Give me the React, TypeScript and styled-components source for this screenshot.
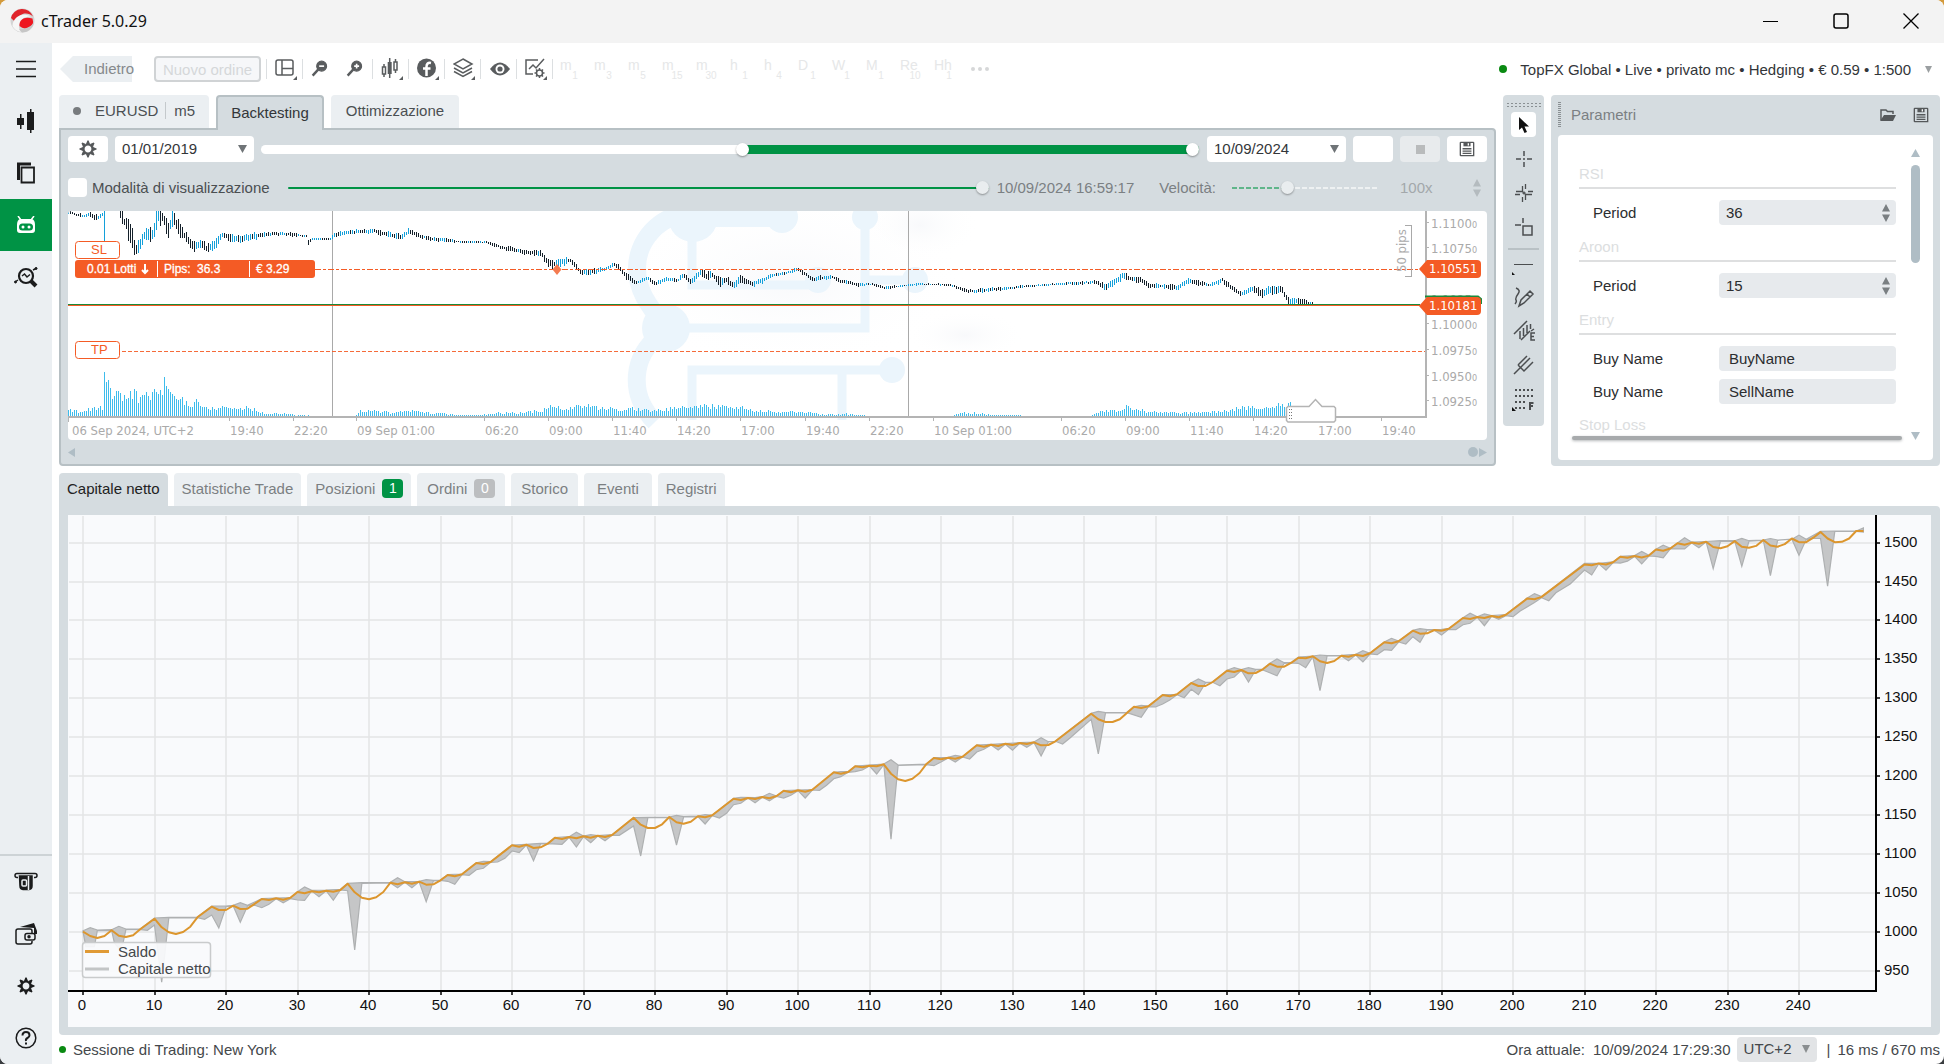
import React from "react";
import styled, { createGlobalStyle, css } from "styled-components";

const ui = `"Liberation Sans", Arial, sans-serif`;
const titleFont = `"Noto Sans", "Open Sans", sans-serif`;
const axisFont = `"DejaVu Sans Condensed", "Noto Sans", sans-serif`;
const c = {
  panel: "#d5dce0",
  soft: "#ebeff2",
  edge: "#b7c0c4",
  ink: "#333639",
  dim: "#7b8083",
  green: "#009345",
  orange: "#f45b25",
  steel: "#afbdc5",
};

const Global = createGlobalStyle`
  * { box-sizing: border-box; }
  body { margin: 0; background: linear-gradient(#d39a3c 50%, #3a3d40 50%); font-family: ${ui}; font-size: 15px; color: ${c.ink}; }
  button, input, select { font: inherit; color: inherit; margin: 0; padding: 0; border: 0; background: none; }
  svg { display: block; }
`;

const Window = styled.div`
  min-height: 100vh; display: flex; flex-direction: column;
  background: #fff; border-radius: 8px; overflow: hidden;
`;
const TitleBar = styled.header`
  height: 43px; background: #f3f3f3; display: flex; align-items: center; padding: 0 25px 2px 10px;
`;
const Title = styled.h1`
  flex: 1; margin: 0 0 0 6px; font: 400 16px/24px ${titleFont}; color: #111;
`;
const WindowButtons = styled.div`display: flex; gap: 54px;`;
const PlainButton = styled.button`display: flex; align-items: center; justify-content: center;`;
const Body = styled.div`flex: 1; display: flex;`;
const Sidebar = styled.nav`
  width: 52px; flex: none; background: ${c.soft}; display: flex; flex-direction: column;
`;
const SideButton = styled.button<{ $active?: boolean }>`
  height: 52px; display: flex; align-items: center; justify-content: center; color: #1b1c1d;
  ${p => p.$active && css`background: ${c.green}; color: #fff;`}
`;
const SideFoot = styled.div`
  margin-top: auto; border-top: 2px solid #cdd3d6; display: flex; flex-direction: column;
`;
const Main = styled.main`flex: 1; min-width: 0; padding: 0 4px 0 7px; display: flex; flex-direction: column;`;

const Toolbar = styled.div`height: 52px; display: flex; align-items: center;`;
const BackButton = styled.button`
  width: 72px; height: 26px; margin: 0 22px 0 1px; padding: 0 0 2px 24px; text-align: left;
  background: ${c.soft}; color: #85898c; white-space: nowrap;
  clip-path: polygon(0 50%, 18% 0, 110% 0, 110% 100%, 18% 100%);
`;
const OrderButton = styled.button`
  width: 107px; height: 26px; margin-right: 5px; border: 2px solid #d0d3d5; border-radius: 4px;
  background: #f6f7f9; color: #d5d7d9;
`;
const ToolGroup = styled.div<{ $wide?: boolean }>`
  width: ${p => (p.$wide ? 70 : 36)}px; height: 20px; padding-left: ${p => (p.$wide ? 0 : 3)}px; border-left: 1px solid #dcdfe1;
  display: flex; align-items: center; justify-content: ${p => (p.$wide ? "space-around" : "center")}; color: #595c5e;
`;
const Frames = styled.div`display: flex; padding-left: 4px; border-left: 1px solid #dcdfe1; height: 20px; align-items: center;`;
const Frame = styled.button`
  width: 34px; height: 26px; padding-left: 3px; display: flex; color: #e6e7e8; font-size: 14px; line-height: 19px;
  sub { font-size: 10px; line-height: 12px; width: 14px; margin-left: -2px; align-self: flex-end; text-align: center; }
`;
const FrameName = styled.span`width: 10px; text-align: left;`;
const Account = styled.button`
  margin-left: auto; display: flex; align-items: center; padding-right: 8px; white-space: nowrap;
`;
const Dot = styled.span<{ $color: string; $size: number }>`
  width: ${p => p.$size}px; height: ${p => p.$size}px; border-radius: 50%; background: ${p => p.$color}; flex: none;
`;
const AccountName = styled.span`margin: 0 14px 0 13px;`;

const Top = styled.div`display: flex; gap: 7px; align-items: stretch;`;
const Left = styled.section`flex: 1; min-width: 0; display: flex; flex-direction: column;`;
const Tabs = styled.div<{ $gap: number }>`display: flex; gap: ${p => p.$gap}px; height: 33px;`;
const Tab = styled.button<{ $active?: boolean; $pad: number }>`
  height: 33px; padding: 0 ${p => p.$pad}px 2px; border-radius: 4px 4px 0 0; background: ${c.soft};
  display: flex; align-items: center; white-space: nowrap; color: #4b4f52;
`;
const TopTab = styled(Tab)`
  ${p => p.$active && css`height: 35px; background: ${c.panel}; border: 2px solid ${c.edge}; border-bottom: 0; z-index: 1; color: ${c.ink};`}
`;
const LowTab = styled(Tab)`
  color: #7b7f82; gap: 7px;
  ${p => p.$active && css`background: ${c.panel}; color: #222;`}
`;
const Split = styled.span`width: 1px; height: 17px; background: #c4c9cc; margin: 0 8px 0 7px;`;
const Badge = styled.span<{ $color: string }>`
  width: 21px; height: 19px; border-radius: 4px; background: ${p => p.$color}; color: #fff;
  font-size: 14px; line-height: 19px; text-align: center;
`;
const Panel = styled.div`
  flex: 1; background: ${c.panel}; border: 2px solid ${c.edge}; border-radius: 0 4px 4px 4px; padding: 6px 7px 0;
`;
const Row = styled.div`display: flex; height: 26px; align-items: stretch; gap: 7px;`;
const RowTwo = styled.div`display: flex; height: 49px; padding: 2px 6px 0 0; align-items: center; color: ${c.dim};`;
const BoxButton = styled.button<{ $off?: boolean }>`
  width: 40px; border-radius: 4px; background: ${p => (p.$off ? "#e8ebed" : "#fff")};
  display: flex; align-items: center; justify-content: center; color: #55585a;
`;
const SelectWrap = styled.div<{ $w: number; $bg: string }>`
  width: ${p => p.$w}px; border-radius: 4px; background: ${p => p.$bg}; display: grid; align-items: center;
  > * { grid-area: 1 / 1; }
  > svg { justify-self: end; margin-right: 7px; pointer-events: none; }
`;
const Select = styled.select`appearance: none; height: 100%; padding-left: 7px; outline: 0; padding-bottom: 1px;`;

const thumb = (color: string) => `
  appearance: none; width: 13px; height: 13px; border-radius: 50%; background: ${color}; border: 0;
  box-shadow: 0 1px 2px rgba(0,0,0,.35); pointer-events: auto;
`;
const RangeWrap = styled.div<{ $track: string; $h: number }>`
  flex: 1; display: grid; align-items: center; margin-right: 1px;
  &::before { content: ""; grid-area: 1 / 1; height: ${p => p.$h}px; border-radius: 5px; background: ${p => p.$track}; }
  > input { grid-area: 1 / 1; }
`;
const Range = styled.input<{ $thumb: string }>`
  appearance: none; width: 100%; height: 16px; background: transparent; pointer-events: none;
  &::-webkit-slider-thumb { ${p => thumb(p.$thumb)} }
`;
const SpeedWrap = styled(RangeWrap)`flex: none; width: 146px; margin: 0 22px 0 16px; &::before { border-radius: 0; }`;
const ProgressWrap = styled(RangeWrap)`margin: 0 8px 0 18px;`;
const Check = styled.label`
  display: flex; align-items: center; gap: 5px; color: #4b4f52;
  input { appearance: none; width: 19px; height: 19px; border-radius: 4px; background: #fff; }
`;
const SpeedLabel = styled.label`margin-left: 25px;`;
const SpeedInput = styled.input`width: 73px; color: #a3a8ab;`;
const ChartBox = styled.div`
  background: #fff; border-radius: 4px; overflow: hidden;
  svg { width: 100%; height: auto; }
`;
const ScrollRow = styled.div`height: 24px; display: flex; align-items: center; gap: 1px; > :first-child { margin-right: auto; }`;

const Strip = styled.aside`
  width: 41px; align-self: flex-start; background: ${c.panel}; border-radius: 4px; padding: 7px 0 6px;
  display: flex; flex-direction: column; align-items: center; color: #4b4e50;
`;
const StripButton = styled.button<{ $active?: boolean }>`
  width: 25px; height: 25px; margin-bottom: 9px; border-radius: 4px; display: flex; align-items: center; justify-content: center;
  ${p => p.$active && css`background: #fff;`}
`;
const Grip = styled.span`
  width: 35px; height: 5px; margin-bottom: 5px;
  background: radial-gradient(circle, #8a9093 1px, transparent 1px) 0 0 / 4px 3px;
`;
const StripRule = styled.span`width: 31px; height: 2px; background: #b9c1c5;`;

const Params = styled.aside`
  width: 389px; background: ${c.panel}; border-radius: 4px; padding: 0 7px 6px; display: flex; flex-direction: column;
`;
const ParamsHead = styled.div`height: 40px; display: flex; align-items: center; gap: 17px; padding-right: 4px; color: #55585a;`;
const SideGrip = styled.span`
  width: 3px; height: 26px; background: repeating-linear-gradient(#8a9093 0 1px, transparent 1px 2px);
`;
const ParamsTitle = styled.h2`flex: 1; margin: 0 0 0 -7px; font: 400 15px/20px ${ui}; color: ${c.dim};`;
const ParamsBody = styled.div`flex: 1; min-height: 0; background: #fff; border-radius: 4px; display: flex; padding: 14px 11px 16px 14px;`;
const Fields = styled.div`flex: 1; display: flex; flex-direction: column; padding: 11px 6px 0 7px;`;
const FieldGroup = styled.fieldset`margin: 0; padding: 0; border: 0; min-width: 0;`;
const FieldHead = styled.legend`
  width: 100%; height: 29px; padding: 0; line-height: 27px; border-bottom: 2px solid #dedfe0; color: #dcdee0; margin-bottom: 11px;
`;
const FieldRow = styled.div`display: flex; align-items: center; height: 25px; margin-bottom: 8px; color: #2b2d2f;`;
const FieldLabel = styled.label`width: 126px; margin-left: 14px;`;
const FieldBox = styled.div`
  flex: 1; height: 25px; background: #e7eaed; border-radius: 4px; display: grid; align-items: center;
  > * { grid-area: 1 / 1; } > svg { justify-self: end; margin-right: 6px; }
`;
const FieldInput = styled.input<{ $pad: number }>`
  width: 100%; height: 25px; padding: 0 20px 0 ${p => p.$pad}px; appearance: textfield; outline: 0;
  &::-webkit-inner-spin-button { appearance: none; }
`;
const LastHead = styled.div`height: 24px; line-height: 26px; color: #dcdee0;`;
const FadeBar = styled.div`height: 4px; margin: 0 -6px 0 -7px; border-radius: 3px; background: #a7aaac; box-shadow: 0 1px 3px #b5b8ba; flex: none;`;
const ScrollBar = styled.div`
  width: 13px; margin-left: 7px; padding-bottom: 4px;
  display: flex; flex-direction: column; align-items: center; justify-content: space-between;
`;
const ScrollTop = styled.div`display: flex; flex-direction: column; align-items: center; gap: 8px;`;
const ScrollThumb = styled.span`width: 9px; height: 98px; border-radius: 5px; background: ${c.steel};`;

const Bottom = styled.section`margin-top: 7px;`;
const BottomPanel = styled.div`background: ${c.panel}; border-radius: 0 4px 4px 4px; padding: 9px 9px 8px; svg { width: 100%; height: auto; }`;
const Status = styled.footer`
  height: 29px; display: flex; align-items: center; padding: 0 0 1px 0; white-space: nowrap; color: #44484b;
`;
const StatusText = styled.span<{ $left?: number }>`margin-left: ${p => p.$left ?? 0}px;`;
const StatusRight = styled.div`margin-left: auto; display: flex; align-items: center;`;
const Zone = styled(SelectWrap)`height: 25px; margin: 0 10px 0 6px;`;

const Tri = ({ dir = "down", w = 9, h = 8, fill = "#6f7477" }: { dir?: string; w?: number; h?: number; fill?: string }) => {
  const d: Record<string, string> = {
    down: "M0 0H10L5 10Z", up: "M0 10H10L5 0Z", left: "M10 0V10L0 5Z", right: "M0 0V10L10 5Z",
  };
  return <svg width={w} height={h} viewBox="0 0 10 10" preserveAspectRatio="none" fill={fill}><path d={d[dir]} /></svg>;
};
const Spin = ({ fill = "#7a7f82" }) => (
  <svg width="8" height="18" viewBox="0 0 8 18" fill={fill}><path d="M0 7.500H8L4 0ZM0 10.500H8L4 18Z" /></svg>
);
const Corner = () => <path d="M22 18V22H18Z" fill="currentColor" stroke="none" />;
const Ico = ({ s = 22, w = 1.5, children }: { s?: number; w?: number; children: React.ReactNode }) => (
  <svg width={s} height={s} viewBox="0 0 22 22" fill="none" stroke="currentColor" strokeWidth={w}>{children}</svg>
);
const Gear = ({ s = 18 }) => (
  <svg width={s} height={s} viewBox="-9 -9 18 18" fill="none" stroke="currentColor">
    <circle r="4.500" strokeWidth="2.200" />
    {[0, 45, 90, 135, 180, 225, 270, 315].map(a => (
      <path key={a} d="M-2 -5L-.6 -8.600H.6L2 -5Z" fill="currentColor" stroke="none" transform={`rotate(${a})`} />
    ))}
  </svg>
);
const Floppy = ({ s = 18 }) => (
  <svg width={s} height={s} viewBox="0 0 18 18" fill="none" stroke="currentColor" strokeWidth="1.500">
    <path d="M2 1.500H16L16.500 2V16.500H2L1.500 16V2Z" />
    <path d="M5 2H13V6H5Z" fill="currentColor" stroke="none" /><path d="M10.500 2.500V5" stroke="#fff" />
    <path d="M4 8.700H14M4 11.300H14M4 14H14" />
  </svg>
);
const Logo = () => (
  <svg width="25" height="25" viewBox="0 0 25 25">
    <circle cx="12.500" cy="12.500" r="12" fill="#d4d4d4" />
    <path d="M1 10A11.500 11.500 0 0 1 23 8.500C18 3.500 8 4.500 6.500 14Q3.500 13 1 10Z" fill="#e0242b" />
    <path d="M2.500 18C3 9 12 4 21 8.500C14 8 9 12 9 19Q9 22 11 24Q5 23 2.500 18Z" fill="#f6f6f6" />
    <path d="M9.500 18C9 11 15 8 22.500 10.500Q24.500 17 19 19.500T9.500 18Z" fill="#ee1620" />
    <path d="M9 21Q17 22 24 15Q21 24 12 24.500Z" fill="#c6c6c6" />
  </svg>
);

/* Linear interpolation over a sorted list of points */
type Pt = [number, number];
const at = (pts: number[][], x: number, k: number) => {
  let i = 1;
  while (i < pts.length - 1 && pts[i][0] < x) i++;
  const a = pts[i - 1], b = pts[i];
  const t = Math.min(1, Math.max(0, (x - a[0]) / (b[0] - a[0])));
  return a[k] + (b[k] - a[k]) * t;
};
const noise = (n: number) => {
  const v = Math.sin(n * 12.9898) * 43758.5453;
  return v - Math.floor(v);
};

/* x, mid price, half range */
const price = [
  [69, 212, 2], [76, 215, 2], [84, 216, 2], [88, 214, 2], [97, 218, 3], [103, 213, 3], [119, 213, 5], [125, 223, 7], [130, 232, 12], [135, 250, 8],
  [140, 243, 6], [146, 233, 6], [153, 235, 8], [157, 215, 10], [163, 217, 7], [168, 230, 9], [173, 217, 8], [178, 228, 7], [185, 237, 5],
  [194, 247, 5], [200, 243, 5], [207, 249, 4], [213, 246, 5], [222, 235, 3], [230, 238, 4], [240, 239, 4], [255, 236, 3], [270, 234, 2],
  [285, 234, 2], [307, 236, 1], [308, 242, 3], [312, 239, 1], [331, 239, 1], [333, 235, 3], [350, 232, 2], [375, 231, 2], [385, 234, 3],
  [402, 237, 3], [408, 231, 3], [425, 238, 2], [445, 240, 2], [460, 242, 1], [485, 242, 1], [500, 247, 2], [515, 250, 2], [530, 253, 3], [540, 253, 4],
  [548, 263, 4], [555, 264, 4], [570, 260, 3], [580, 272, 3], [595, 271, 3], [604, 269, 2], [614, 265, 2], [618, 267, 3], [625, 275, 3],
  [635, 283, 2], [648, 278, 2], [655, 284, 2], [665, 279, 2], [678, 280, 2], [683, 275, 3], [691, 282, 3], [700, 272, 3], [706, 276, 5],
  [712, 275, 3], [720, 282, 5], [726, 280, 4], [733, 286, 3], [740, 279, 4], [745, 281, 3], [752, 284, 3], [760, 281, 3], [773, 275, 2],
  [790, 272, 2], [797, 269, 2], [805, 274, 2], [813, 280, 3], [820, 278, 2], [832, 277, 2], [840, 281, 2], [860, 285, 2], [870, 284, 1],
  [885, 288, 2], [900, 286, 1], [920, 284, 1], [950, 285, 1], [966, 291, 2], [975, 291, 2], [1010, 288, 2], [1030, 286, 1], [1060, 284, 1],
  [1095, 282, 2], [1105, 287, 3], [1117, 281, 3], [1122, 275, 4], [1128, 278, 3], [1140, 280, 3], [1150, 286, 3], [1165, 286, 2], [1176, 288, 3],
  [1188, 281, 3], [1210, 285, 2], [1222, 280, 3], [1232, 288, 3], [1240, 294, 3], [1252, 289, 4], [1262, 294, 5], [1270, 290, 4],
  [1282, 290, 4], [1288, 302, 4], [1300, 301, 3], [1312, 304, 3], [1314, 305, 2],
];
/* x, bar height */
const volume = [
  [68, 8], [80, 5], [95, 9], [102, 9], [104, 38], [108, 30], [113, 22], [125, 20], [135, 25], [138, 17], [150, 22], [160, 26], [162, 22],
  [164, 41], [166, 28], [172, 20], [180, 18], [190, 12], [197, 16], [205, 8], [225, 10], [235, 8], [250, 9], [265, 3], [280, 4], [295, 2],
  [312, 1], [355, 1], [360, 6], [375, 6], [390, 4], [410, 6], [430, 4], [460, 2], [480, 2], [500, 4], [520, 4], [540, 6], [548, 10], [570, 8],
  [580, 12], [600, 8], [612, 8], [640, 8], [655, 6], [680, 9], [704, 11], [720, 10], [738, 10], [755, 6], [775, 5], [800, 5], [820, 3],
  [845, 3], [870, 1], [890, 0], [950, 0], [960, 5], [968, 4], [1000, 2], [1050, 1], [1090, 1], [1100, 5], [1120, 7], [1124, 11],
  [1135, 7], [1150, 5], [1180, 4], [1210, 5], [1230, 6], [1240, 9], [1255, 9], [1270, 10], [1284, 13], [1290, 12],
];

const candles = () => {
  let up = "", down = "";
  for (let x = 68; x <= 1314; x += 2) {
    if (x > 103 && x < 119) continue;
    const mid = at(price, x, 1), half = at(price, x, 2) * (0.5 + 0.6 * noise(x));
    const drift = (noise(x + 7) - 0.5) * half * 0.5;
    const top = Math.max(211, Math.round(mid - half + drift));
    const d = `M${x + 0.5} ${top}V${Math.max(top + 1, Math.round(mid + half + drift))}`;
    const slope = at(price, x + 3, 1) - at(price, x - 3, 1);
    if (noise(x * 3) * 4 - 2 > slope) up += d; else down += d;
  }
  return { up: up + "M104.5 211V241", down };
};
const bars = () => {
  let d = "";
  for (let x = 68; x <= 1290; x += 2) {
    const h = Math.round(at(volume, x, 1) * (0.75 + 0.5 * noise(x + 1)));
    if (h > 0) d += `M${x + 0.5} ${417 - h}V417`;
  }
  return d;
};
const ticks: [number, string][] = [
  [229, "19:40"], [293, "22:20"], [356, "09 Sep 01:00"], [484, "06:20"], [548, "09:00"], [612, "11:40"], [676, "14:20"], [740, "17:00"],
  [805, "19:40"], [869, "22:20"], [933, "10 Sep 01:00"], [1061, "06:20"], [1125, "09:00"], [1189, "11:40"], [1253, "14:20"], [1317, "17:00"], [1381, "19:40"],
];
const levels: [number, string][] = [
  [224, "1.1100"], [249, "1.1075"], [274, "1.1050"], [300, "1.1025"], [325, "1.1000"], [351, "1.0975"], [377, "1.0950"], [402, "1.0925"],
];

const PriceTag = ({ y, text }: { y: number; text: string }) => (
  <g>
    <path d={`M1419 ${y}L1427 ${y - 9}H1477Q1481 ${y - 9} 1481 ${y - 5}V${y + 5}Q1481 ${y + 9} 1477 ${y + 9}H1427Z`} fill={c.orange} />
    <text x="1429" y={y + 4} fill="#fff" fontFamily={axisFont} fontSize="13">{text}</text>
  </g>
);

const PriceChart = () => {
  const k = candles();
  return (
    <svg viewBox="68 211 1419 229" role="img" aria-label="EURUSD m5">
      <defs>
        <radialGradient id="halo"><stop offset="0" stopColor="#f8f9fb" /><stop offset="1" stopColor="#fff" stopOpacity="0" /></radialGradient>
      </defs>
      <ellipse cx="790" cy="280" rx="180" ry="90" fill="url(#halo)" />
      <ellipse cx="920" cy="225" rx="60" ry="35" fill="url(#halo)" />
      <ellipse cx="965" cy="335" rx="60" ry="25" fill="url(#halo)" />
      <g fill="#ebf5fc" stroke="#ebf5fc">
        <path d="M700 212C655 212 637 245 637 268C637 290 648 305 662 322M660 335C632 355 628 395 655 422" fill="none" strokeWidth="18" />
        <path d="M690 219H785M692 235V285H812M865 220V328H675M865 280H910M842 372V420M692 420V370H890" fill="none" strokeWidth="9" />
        <path d="M690 216H785" strokeWidth="22" />
        <g stroke="none">
          <circle cx="693" cy="217" r="25" /><circle cx="782" cy="217" r="16" /><circle cx="666" cy="328" r="24" /><circle cx="818" cy="280" r="13" />
          <circle cx="865" cy="217" r="13" /><circle cx="915" cy="280" r="13" /><circle cx="892" cy="370" r="13" />
        </g>
      </g>
      <g fill="none" shapeRendering="crispEdges">
        <path d="M332.5 211V417M908.500 211V417" stroke="#a9a9a9" />
        <path d={bars()} stroke="#3ebcec" />
        <path d={k.down} stroke="#14202a" />
        <path d={k.up} stroke="#14a0da" />
        <path d="M315 269.500H1420" stroke={c.orange} strokeDasharray="6 2 3 2" />
        <path d="M122 351.500H1425" stroke={c.orange} strokeDasharray="4 2" opacity=".9" />
        <path d="M68 304.500H1420" stroke="#1a8a3c" />
        <path d="M68 305.500H1420" stroke={c.orange} />
        <path d="M68 417H1426" stroke="#b4b4b4" strokeWidth="2" />
        <path d="M1426 211V418" stroke="#b4b4b4" strokeWidth="2" />
        <path d="M1405 225.500H1411.500V276.500H1405" stroke="#a9a9a9" />
        <path d={"M68.5 418V422" + ticks.map(t => `M${t[0] + 0.5} 418V421`).join("") + levels.map(l => `M1427 ${l[0] - 1.5}H1429`).join("")} stroke="#b4b4b4" />
      </g>
      <path d="M557 264L561.500 269.500L557 275L552.500 269.500Z" fill="#f47b50" />
      <g fontFamily={axisFont} fontSize="13" fill="#aaa">
        <text x="72" y="435">06 Sep 2024, UTC+2</text>
        {ticks.map(t => <text key={t[0]} x={t[0] + 1} y="435">{t[1]}</text>)}
        {levels.map(l => <text key={l[1]} x="1431" y={l[0] + 4}>{l[1]}<tspan fontSize="9">0</tspan></text>)}
        <text transform="translate(1406 272) rotate(-90)">50 pips</text>
      </g>
      <path d="M1425 296.500H1478L1481 299V304" stroke="#1a8a3c" fill="none" strokeWidth="2" />
      <PriceTag y={269} text="1.10551" />
      <PriceTag y={306} text="1.10181" />
      <path d="M1288 406.500H1309L1315.500 399.500L1322 406.500H1334L1335.500 408V420.500L1334 422H1288L1286.500 420.500V408Z" fill="#fff" stroke="#b4b4b4" strokeWidth="1.500" />
      <path d="M1289.500 409V419M1291.500 409V419" stroke="#777" strokeDasharray="1 2" />
      <g fontFamily={ui} fontSize="12" fill={c.orange}>
        <rect x="75.500" y="241.500" width="44" height="17" rx="3" fill="#fff" stroke={c.orange} />
        <text x="91" y="254" fontSize="13">SL</text>
        <rect x="75.500" y="341.500" width="44" height="17" rx="3" fill="#fff" stroke={c.orange} />
        <text x="91" y="354" fontSize="13">TP</text>
        <rect x="75" y="260" width="240" height="18" rx="3" />
        <path d="M157.500 261V277M249.500 261V277" stroke="#fff" />
        <path d="M145 264V273M142 270L145 273L148 270" stroke="#fff" strokeWidth="2" fill="none" />
        <g fill="#fff" stroke="#fff" strokeWidth=".3">
          <text x="87" y="273">0.01 Lotti</text><text x="164" y="273">Pips:</text><text x="197" y="273">36.3</text><text x="256" y="273">€ 3.29</text>
        </g>
      </g>
    </svg>
  );
};

/* Alternating trade index and vertical reading, with the reading's base and scale */
const series = (base: number, scale: number, s: string): Pt[] =>
  s.split(" ").map(p => { const [i, v] = p.split(":").map(Number); return [83 + i * 7.15, base + v / scale] as Pt; });

const balance = [
  ...series(820, 3, "0:335 1:348 2:354 3:348 4:331 5:347 6:351 7:346 8:328 10:296 11:322 12:337 13:342 14:336 15:320 16:292 18:260 19:270 20:270 21:257 22:267 23:266 25:237 26:240 27:235 28:239 29:233 30:216 31:220 32:214 33:217 34:212 35:215 36:210 37:191 38:217 39:233 40:238 41:232 42:216 43:188 44:193 45:187 46:191 47:185 48:194 49:193 50:181 51:165 52:169 53:163 55:129 56:132 57:126 60:76 61:80 62:74 63:84 64:82 65:71"),
  ...series(740, 3, "66:293 67:297 68:291 69:295 70:289 71:293 72:287 73:291 74:285 77:233 78:254 79:264 80:264 81:253 82:231 83:247 84:251 85:245 86:229 87:232 88:226 91:176 92:180 93:174 94:177 95:171 96:175 97:168 98:152 99:157 100:151 101:155 102:149 105:97 106:101 107:96 108:79 109:82 110:77 111:79 112:73 113:101 114:118 115:123 116:116 117:99 118:71 119:54 120:58 121:53 122:56 123:50 125:16"),
  ...series(600, 3, "126:440 127:434 128:438 129:431 130:435 131:429 132:432 133:427 134:436 135:435 136:424 141:341 142:358 143:366 144:366 145:358 147:320 148:324 149:319 151:285 152:289 153:283 155:249 156:258 157:258 158:246 160:212 161:216 162:210 163:220 164:219 165:208 166:191 167:200 168:200 169:188 170:173 171:175 172:169 173:184 174:189 175:183 176:167 177:170 178:164 179:168 180:160 182:127 183:130 184:124 186:92 187:101 188:100 189:90 190:92 191:86 193:54 194:57 195:51 196:54 197:48 198:52"),
  ...series(480, 2.685, "199:362 202:318 203:320 204:314 210:227 211:229 212:224 213:227 214:221 215:206 216:209 217:204 218:208 219:203 220:187 221:190 222:184 223:170 224:174 225:168 226:171 227:166 228:180 229:183 230:178 231:164 232:179 233:182 234:177 235:161 236:176 237:179 238:172 239:157 240:167 241:167 242:155 243:140 244:157 245:167 246:166 247:157 248:137 249:137"),
];
const high = [
  ...series(820, 3, "0:332 1:323 2:330 4:329 5:319 6:327 8:327 10:294 12:292 16:291 18:258 20:258 21:256 22:248 23:256 25:236 27:234 29:233 30:215 31:201 32:211 34:210 36:208 37:190 39:188 43:187 44:173 45:185 47:184 48:179 49:181 50:180 51:164 53:162 55:128 56:124 57:125 60:75 62:73 64:70 65:69"),
  ...series(740, 3, "66:293 67:291 68:290 69:277 70:288 71:284 72:287 74:284 77:233 79:232 82:231 83:226 84:230 86:228 87:224 88:226 91:175 92:172 94:173 95:170 96:160 97:168 98:152 100:150 102:149 105:97 106:95 107:95 108:78 112:72 113:59 114:75 118:72 119:53 121:52 122:46 123:50 125:15 127:13 131:8"),
  ...series(600, 3, "133:426 134:413 135:425 136:424 141:340 142:334 143:338 146:337 147:320 148:316 149:318 151:284 153:283 155:248 156:237 157:247 158:246 160:211 161:203 162:209 163:203 164:208 165:208 166:190 167:177 168:188 169:187 170:171 172:168 173:165 174:167 176:166 178:163 179:152 180:160 182:126 183:115 184:123 186:91 187:86 188:89 190:88 191:86 193:53 194:40 195:50 196:42 197:47"),
  ...series(480, 2.685, "199:361 202:317 203:305 204:313 210:224 212:224 214:220 215:205 217:203 218:192 219:202 220:186 221:175 222:183 223:169 224:155 225:167 227:165 229:163 231:163 232:157 233:163 235:161 236:157 237:161 239:159 240:148 241:159 243:138 245:137 248:137 249:129"),
];
const low = [
  ...series(820, 3, "0:335 0.4:380 1.600:380 2:332 4:331 4.400:370 5:385 5.600:370 6:329 8:329 9:331 10:315 11:487 12:294 16:293 17:298 18:285 19:324 20:260 21:258 22:307 23:258 24:256 25:263 26:253 27:236 28:248 29:236 30:240 31:241 32:213 33:230 34:212 35:241 36:210 37:212 38:390 39:190 43:189 44:203 45:187 46:203 47:185 48:245 49:183 50:181 51:184 52:193 53:164 54:166 55:149 56:145 57:127 58:126 59:115 60:93 61:98 62:75 63:122 64:72"),
  ...series(740, 3, "65:311 67:313 68:292 69:321 70:290 71:308 72:288 73:302 74:286 75:286 77:258 78:348 79:233 82:232 83:315 84:231 86:230 87:252 88:227 89:234 90:220 91:194 92:190 93:174 94:188 95:172 96:182 97:169 98:174 99:166 100:152 101:174 102:150 103:151 104:136 105:116 106:110 107:97 108:95 109:90 110:78 111:102 112:74 113:298 114:76 118:74 119:77 120:66 121:54 122:66 123:51 124:57 125:36 126:28 127:15 128:30 129:13 130:31 131:10"),
  ...series(600, 3, "132:442 133:428 134:468 135:426 136:424 137:432 138:415 141:358 142:462 143:339 146:338 148:352 149:320 150:321 151:312 152:300 153:284 154:293 155:268 156:284 157:249 158:247 159:257 160:237 161:231 162:211 163:246 164:210 165:210 167:227 168:190 169:189 170:190 171:203 172:170 173:272 174:168 176:168 177:182 178:165 179:186 180:162 181:164 182:149 183:151 184:126 185:132 186:110 187:127 188:90 189:91 190:105 191:88 192:89 193:74 194:70 195:52 196:77 197:49 198:58"),
  ...series(480, 2.685, "199:364 200:367 201:352 203:329 204:316 205:324 206:303 208:279 210:242 211:255 212:225 213:242 214:222 215:223 216:218 217:205 218:225 219:204 220:205 221:209 222:185 224:185 225:169 226:182 227:166 228:238 229:165 231:164 232:232 233:164 235:162 236:257 237:162 239:159 240:202 241:160 242:157 243:157 244:285 245:138 248:138 249:140"),
];
const poly = (p: Pt[]) => p.map(q => `${q[0].toFixed(1)},${q[1].toFixed(1)}`).join(" ");

const EquityChart = () => {
  const xs = Array.from({ length: 25 }, (_, i) => i * 10);
  const ys = Array.from({ length: 12 }, (_, i) => 950 + i * 50);
  const px = (v: number) => Math.round(83 + v * 7.15);
  const py = (v: number) => Math.round(542.6 + (1500 - v) * 0.7787);
  return (
    <svg viewBox="68 515 1863 512" role="img" aria-label="Capitale netto">
      <rect x="68" y="515" width="1863" height="512" fill="#f9fafc" />
      <g stroke="#e3e5e6" strokeWidth="1.500">
        {xs.map(v => <path key={v} d={`M${px(v)} 516V990`} />)}
        {ys.map(v => <path key={v} d={`M69 ${py(v)}H1875`} />)}
      </g>
      <polygon points={poly(high) + " " + poly([...low].reverse())} fill="#c5c6c7" stroke="#aeb0b1" strokeWidth="1.200" />
      <polyline points={poly(balance)} fill="none" stroke="#dc962e" strokeWidth="2" strokeLinejoin="round" />
      <path d="M68 991H1876V515" fill="none" stroke="#000" strokeWidth="2" />
      <path d={xs.map(v => `M${px(v)} 992V995`).join("") + ys.map(v => `M1877 ${py(v)}H1880`).join("")} stroke="#000" strokeWidth="1.500" />
      <g fontFamily={ui} fontSize="15" fill="#111">
        {xs.map(v => <text key={v} x={px(v) - 1} y="1010" textAnchor="middle">{v}</text>)}
        {ys.map(v => <text key={v} x="1884" y={py(v) + 4}>{v}</text>)}
      </g>
      <rect x="82.500" y="942.500" width="128" height="35" rx="3" fill="#f9fafc" fillOpacity=".92" stroke="#c9cbcc" strokeWidth="1.500" />
      <path d="M85 951.500H109" stroke="#e09a35" strokeWidth="3" /><path d="M85 969H109" stroke="#c3c5c6" strokeWidth="3" />
      <g fontFamily={ui} fontSize="15" fill="#44484b"><text x="118" y="957">Saldo</text><text x="118" y="974">Capitale netto</text></g>
    </svg>
  );
};

const frames: [string, string][] = [
  ["m", "1"], ["m", "3"], ["m", "5"], ["m", "15"], ["m", "30"], ["h", "1"], ["h", "4"], ["D", "1"], ["W", "1"], ["M", "1"], ["Re", "10"], ["Hh", "1"],
];

const NumberField = ({ id, value }: { id: string; value: number }) => (
  <FieldRow>
    <FieldLabel htmlFor={id}>Period</FieldLabel>
    <FieldBox><FieldInput id={id} type="number" $pad={7} defaultValue={value} /><Spin /></FieldBox>
  </FieldRow>
);
const TextField = ({ id, value }: { id: string; value: string }) => (
  <FieldRow>
    <FieldLabel htmlFor={id}>Buy Name</FieldLabel>
    <FieldBox><FieldInput id={id} type="text" $pad={10} defaultValue={value} /></FieldBox>
  </FieldRow>
);

export default function App() {
  return (
    <Window>
      <Global />
      <TitleBar>
        <Logo />
        <Title>cTrader 5.0.29</Title>
        <WindowButtons>
          <PlainButton aria-label="Riduci"><svg width="16" height="16" stroke="#000"><path d="M0 8.500H15" /></svg></PlainButton>
          <PlainButton aria-label="Ingrandisci"><svg width="16" height="16" stroke="#000" strokeWidth="1.500" fill="none"><rect x="1" y="1" width="14" height="14" rx="2" /></svg></PlainButton>
          <PlainButton aria-label="Chiudi"><svg width="16" height="16" stroke="#000" strokeWidth="1.300"><path d="M.5 .5L15.500 15.500M15.500 .5L.5 15.500" /></svg></PlainButton>
        </WindowButtons>
      </TitleBar>
      <Body>
        <Sidebar>
          <SideButton aria-label="Menu"><Ico><path d="M1 3.500H21M1 11H21M1 18.500H21" /></Ico></SideButton>
          <SideButton aria-label="Trade"><svg width="20" height="24" fill="currentColor"><path d="M1 9H4V5H5.500V9H8V16H5.500V20H4V16H1ZM11 3H14V0H15.500V3H18V21H15.500V24H14V21H11Z" /></svg></SideButton>
          <SideButton aria-label="Copy"><Ico w={1.8}><path d="M6.500 5.500H19V20.500H6.500Z" /><path d="M3.500 18V2H16" strokeWidth="3" /></Ico></SideButton>
          <SideButton aria-label="Algo" $active>
            <svg width="20" height="18" viewBox="0 0 20 18" fill="currentColor"><path d="M2 0L5 4M18 0L15 4" stroke="currentColor" strokeWidth="1.500" /><path d="M4 3H16Q19 4 19 9V14Q19 17 16 17H4Q1 17 1 14V9Q1 4 4 3Z" /><rect x="3" y="7.500" width="14" height="7" rx="3.500" fill={c.green} /><circle cx="7" cy="11" r="1.500" /><circle cx="13" cy="11" r="1.500" /></svg>
          </SideButton>
          <SideButton aria-label="Analisi">
            <svg width="24" height="24" viewBox="0 0 24 24" fill="none" stroke="currentColor"><circle cx="12" cy="11" r="7" strokeWidth="2.200" /><path d="M17 16L22 21" strokeWidth="4" /><path d="M8 11L10.500 9L13 12L16 9.500" strokeWidth="1.500" /><path d="M1 17L4 15M19 5L23 3" strokeWidth="1.500" /><circle cx="1.500" cy="17" r="1" fill="currentColor" /><circle cx="22" cy="3.500" r="1" fill="currentColor" /></svg>
          </SideButton>
          <SideFoot>
            <SideButton aria-label="Deposito"><svg width="24" height="20" viewBox="0 0 24 20" fill="none" stroke="currentColor" strokeWidth="1.500"><path d="M4 5.500H3Q1 5.500 1 3.500T3 1.500H21Q23 1.500 23 3.500T21 5.500H20" /><path d="M5.500 4H18V14Q18 17 15 17.500H9Q6 17 6 14Z" fill="currentColor" /><rect x="8" y="8" width="4.500" height="6" rx="1" stroke={c.soft} /><path d="M14.500 4V18" stroke={c.soft} /></svg></SideButton>
            <SideButton aria-label="Portafoglio"><svg width="24" height="24" viewBox="0 0 24 24" fill="none" stroke="currentColor" strokeWidth="1.500"><path d="M6 5L20 1L23 9V12H20V6Z" fill="currentColor" stroke="none" /><path d="M18 19V20Q18 22 16 22H4Q2 22 2 20V9Q2 7 4 7H16Q18 7 18 9V11" /><rect x="11" y="11.500" width="10" height="6.500" rx="2" /><circle cx="15" cy="14.700" r="1" fill="currentColor" /></svg></SideButton>
            <SideButton aria-label="Impostazioni"><Gear /></SideButton>
            <SideButton aria-label="Aiuto"><Ico w={1.5}><circle cx="11" cy="11" r="9.800" /><path d="M7.500 8.500Q7.500 5 11 5T14.500 8.300Q14.500 10 12.500 11T11 14" strokeWidth="2" /><path d="M11 15.500V17.500" strokeWidth="2" /></Ico></SideButton>
          </SideFoot>
        </Sidebar>
        <Main>
          <Toolbar>
            <BackButton>Indietro</BackButton>
            <OrderButton>Nuovo ordine</OrderButton>
            <ToolGroup><PlainButton aria-label="Layout"><Ico><rect x="1" y="2" width="17" height="15" rx="2" /><path d="M7 2V17M7 10.500H18" /><Corner /></Ico></PlainButton></ToolGroup>
            <ToolGroup $wide>
              <PlainButton aria-label="Zoom indietro"><Ico s={18}><circle cx="13" cy="7.500" r="6" fill="currentColor" /><path d="M9 11.500L2 19" strokeWidth="3" /><path d="M10 7.500H16" stroke="#fff" strokeWidth="2" /></Ico></PlainButton>
              <PlainButton aria-label="Zoom avanti"><Ico s={18}><circle cx="13" cy="7.500" r="6" fill="currentColor" /><path d="M9 11.500L2 19" strokeWidth="3" /><path d="M10 7.500H16M13 4.500V10.500" stroke="#fff" strokeWidth="2" /></Ico></PlainButton>
            </ToolGroup>
            <ToolGroup><PlainButton aria-label="Candele"><Ico><path d="M3 6V9M3 16V19M1.500 9H4.500V16H1.500ZM14.500 1V4M14.500 12V15M13 4H16V12H13Z" /><path d="M8.700 0V20" /><path d="M8.700 4V16" strokeWidth="4" /><Corner /></Ico></PlainButton></ToolGroup>
            <ToolGroup><PlainButton aria-label="Indicatori"><Ico><circle cx="9.500" cy="10" r="9.500" fill="currentColor" stroke="none" /><path d="M14 5Q9.500 4 9.500 9V18M6 10.500H13.500" stroke="#fff" strokeWidth="2.500" /><Corner /></Ico></PlainButton></ToolGroup>
            <ToolGroup><PlainButton aria-label="Livelli"><Ico><path d="M10 1L19 6L10 11L1 6ZM1 10L10 15L19 10M1 13.500L10 18.500L19 13.500" /><Corner /></Ico></PlainButton></ToolGroup>
            <ToolGroup><PlainButton aria-label="Visibilità"><svg width="20" height="14" viewBox="0 0 20 14"><path d="M0 7Q10-6 20 7Q10 20 0 7Z" fill="currentColor" /><circle cx="10" cy="7" r="4.500" fill="#fff" /><circle cx="10" cy="7" r="2.600" fill="currentColor" /></svg></PlainButton></ToolGroup>
            <ToolGroup><PlainButton aria-label="Impostazioni grafico"><Ico><path d="M13 2H1V16H8M4 11L8 7L11 10L19 1" /><circle cx="14.500" cy="15" r="3" /><path d="M14.500 10V12M14.500 18V20M9.500 15H11.500M17.500 15H19.500M11 11.500L12.500 13M16.500 17L18 18.500M18 11.500L16.500 13M12.500 17L11 18.500" /><Corner /></Ico></PlainButton></ToolGroup>
            <Frames>
              {frames.map(([n, s], i) => <Frame key={i}><FrameName>{n}</FrameName><sub>{s}</sub></Frame>)}
            </Frames>
            <PlainButton aria-label="Altro"><svg width="28" height="6" fill="#d6d7d8"><circle cx="8" cy="3" r="2" /><circle cx="15" cy="3" r="2" /><circle cx="22" cy="3" r="2" /></svg></PlainButton>
            <Account>
              <Dot $color="#0a8a12" $size={8} />
              <AccountName>TopFX Global • Live • privato mc • Hedging • € 0.59 • 1:500</AccountName>
              <Tri w={7} h={7} fill="#9b9fa1" />
            </Account>
          </Toolbar>
          <Top>
            <Left>
              <Tabs $gap={7}>
                <TopTab $pad={14}><Dot $color="#777b7e" $size={8} /><StatusText $left={14}>EURUSD</StatusText><Split />m5</TopTab>
                <TopTab $pad={13} $active>Backtesting</TopTab>
                <TopTab $pad={15}>Ottimizzazione</TopTab>
              </Tabs>
              <Panel>
                <Row>
                  <BoxButton aria-label="Impostazioni"><Gear /></BoxButton>
                  <SelectWrap $w={139} $bg="#fff"><Select aria-label="Data inizio"><option>01/01/2019</option></Select><Tri /></SelectWrap>
                  <RangeWrap $h={9} $track={`linear-gradient(90deg, #fff 51%, ${c.green} 51%)`}>
                    <Range type="range" aria-label="Inizio periodo" $thumb="#fff" min={0} max={1000} defaultValue={514} />
                    <Range type="range" aria-label="Fine periodo" $thumb="#fff" min={0} max={1000} defaultValue={1000} />
                  </RangeWrap>
                  <SelectWrap $w={139} $bg="#fff"><Select aria-label="Data fine"><option>10/09/2024</option></Select><Tri /></SelectWrap>
                  <BoxButton aria-label="Avvia" />
                  <BoxButton aria-label="Ferma" $off><svg width="9" height="9"><rect width="9" height="9" fill="#b9bbbc" /></svg></BoxButton>
                  <BoxButton aria-label="Salva"><Floppy s={16} /></BoxButton>
                </Row>
                <RowTwo>
                  <Check><input type="checkbox" />Modalità di visualizzazione</Check>
                  <ProgressWrap $h={2} $track={c.green}>
                    <Range type="range" aria-label="Avanzamento" $thumb="#e9edef" min={0} max={100} defaultValue={100} />
                  </ProgressWrap>
                  <span>10/09/2024 16:59:17</span>
                  <SpeedLabel htmlFor="speed">Velocità:</SpeedLabel>
                  <SpeedWrap $h={2} $track={`repeating-linear-gradient(90deg, transparent 0 5px, ${c.panel} 5px 7px), linear-gradient(90deg, #5fb58a 38%, #eef1f2 38%)`}>
                    <Range type="range" aria-label="Velocità" $thumb="#e9edef" min={0} max={100} defaultValue={37} />
                  </SpeedWrap>
                  <SpeedInput id="speed" defaultValue="100x" />
                  <Spin fill="#b4bbbf" />
                </RowTwo>
                <ChartBox><PriceChart /></ChartBox>
                <ScrollRow>
                  <PlainButton aria-label="Scorri a sinistra"><Tri dir="left" w={7} h={9} fill={c.steel} /></PlainButton>
                  <Dot $color={c.steel} $size={10} />
                  <PlainButton aria-label="Scorri a destra"><Tri dir="right" w={8} h={9} fill={c.steel} /></PlainButton>
                </ScrollRow>
              </Panel>
            </Left>
            <Strip>
              <Grip />
              <StripButton $active aria-label="Puntatore"><svg width="12" height="16" viewBox="0 0 12 16" fill="#111"><path d="M1 0V13L4 10.500L6.500 16L9 15L6.500 9.500H11Z" /></svg></StripButton>
              <StripButton aria-label="Mirino"><Ico w={1.5}><path d="M11 3V8M11 14V19M3 11H8M14 11H19M10 11H12" /></Ico></StripButton>
              <StripButton aria-label="Mirino magnetico"><Ico w={1.3}><path d="M9.500 4V9.500H3M12.500 2V7M9.500 20V15M12.500 18V12.500H19M2 12.500H7M20 9.500H15M11 9.500V12.500M9.500 11H12.500" /></Ico></StripButton>
              <StripButton aria-label="Regione"><Ico w={1.5}><path d="M10 2V7M2 9H8M10 10H19V19H10Z" /></Ico></StripButton>
              <StripRule />
              <StripButton aria-label="Linea"><svg width="25" height="25" stroke="currentColor"><path d="M3 14.500H22" /><path d="M1 22L5 26H1Z" fill="#111" stroke="none" /></svg></StripButton>
              <StripButton aria-label="Matita"><Ico w={1.5}><path d="M3 2Q8 4 5 8T3 14T2 18M6 20L8 14L17 5L20 8L11 17ZM14 8L17 11" /></Ico></StripButton>
              <StripButton aria-label="Canale"><Ico w={1.5}><path d="M1 14L14 1M7 11V19M10.500 8V16M14 5V13M8 20L17 11M22 13H18V20H22M18 16.500H21M18 11L21 9M17.500 4V9" /></Ico></StripButton>
              <StripButton aria-label="Forchetta"><Ico w={1.5}><path d="M1 20L17 4M5 11L14 2M5 11L11 17L20 8" /></Ico></StripButton>
              <StripButton aria-label="Fibonacci"><svg width="24" height="24" viewBox="0 0 24 24" fill="none" stroke="currentColor" strokeWidth="2"><path d="M3 3H22M3 9H22M3 15H14M3 21H14" strokeDasharray="2 2" /><path d="M21.500 16H18V23M18 19H21" /><path d="M0 20L4 24H0Z" fill="#111" stroke="none" /></svg></StripButton>
            </Strip>
            <Params>
              <ParamsHead>
                <SideGrip />
                <ParamsTitle>Parametri</ParamsTitle>
                <PlainButton aria-label="Apri"><svg width="16" height="12" viewBox="0 0 16 12"><path d="M1 11V1H6L7.500 2.500H13V5" fill="none" stroke="currentColor" strokeWidth="1.500" /><path d="M4 6H16L13 12H0Z" fill="currentColor" /></svg></PlainButton>
                <PlainButton aria-label="Salva"><Floppy s={16} /></PlainButton>
              </ParamsHead>
              <ParamsBody>
                <Fields>
                  <FieldGroup><FieldHead>RSI</FieldHead><NumberField id="rsi" value={36} /></FieldGroup>
                  <FieldGroup><FieldHead>Aroon</FieldHead><NumberField id="aroon" value={15} /></FieldGroup>
                  <FieldGroup><FieldHead>Entry</FieldHead><TextField id="buy" value="BuyName" /><TextField id="sell" value="SellName" /></FieldGroup>
                  <LastHead>Stop Loss</LastHead>
                  <FadeBar />
                </Fields>
                <ScrollBar>
                  <ScrollTop><Tri dir="up" fill={c.steel} /><ScrollThumb /></ScrollTop>
                  <Tri fill={c.steel} />
                </ScrollBar>
              </ParamsBody>
            </Params>
          </Top>
          <Bottom>
            <Tabs $gap={6}>
              <LowTab $pad={8} $active>Capitale netto</LowTab>
              <LowTab $pad={8}>Statistiche Trade</LowTab>
              <LowTab $pad={8}>Posizioni<Badge $color={c.green}>1</Badge></LowTab>
              <LowTab $pad={10}>Ordini<Badge $color="#bcbec0">0</Badge></LowTab>
              <LowTab $pad={10}>Storico</LowTab>
              <LowTab $pad={13}>Eventi</LowTab>
              <LowTab $pad={8}>Registri</LowTab>
            </Tabs>
            <BottomPanel><EquityChart /></BottomPanel>
          </Bottom>
          <Status>
            <Dot $color="#0a8a12" $size={7} />
            <StatusText $left={7}>Sessione di Trading: New York</StatusText>
            <StatusRight>
              <StatusText>Ora attuale:</StatusText>
              <StatusText $left={8}>10/09/2024 17:29:30</StatusText>
              <Zone $w={80} $bg="#e2e4e6"><Select aria-label="Fuso orario"><option>UTC+2</option></Select><Tri w={8} h={8} fill="#8a8e90" /></Zone>
              <StatusText>|</StatusText>
              <StatusText $left={7}>16 ms / 670 ms</StatusText>
            </StatusRight>
          </Status>
        </Main>
      </Body>
    </Window>
  );
}
